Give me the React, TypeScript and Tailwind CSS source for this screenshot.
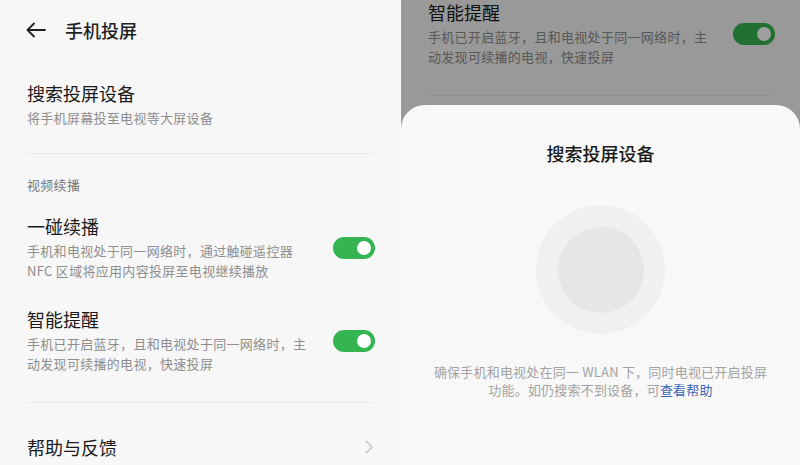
import React from "react";

const FONT = { fontFamily: '"Noto Sans CJK SC", "Noto Sans", sans-serif' };

function Toggle() {
  return (
    <div className="w-[42px] h-[22px] rounded-full bg-[#34b54f] flex items-center justify-end pr-[4px] shrink-0">
      <div className="w-[14px] h-[14px] rounded-full bg-white" />
    </div>
  );
}

function Page() {
  return (
    <div className="w-full bg-[#f7f7f7]">
      <div className="h-[60px] flex items-center pl-[26px]">
        <svg width="20" height="16" viewBox="0 0 20 16" className="shrink-0">
          <path d="M1.5 8 H19 M8 1.5 L1.5 8 L8 14.5" fill="none" stroke="#1f1f1f" strokeWidth="1.8" strokeLinecap="round" strokeLinejoin="round" />
        </svg>
        <div className="ml-[19px] text-[18px] leading-[24px] text-[#1f1f1f] font-medium">手机投屏</div>
      </div>
      <div className="px-[27px] pt-[21px]">
        <div className="text-[18px] leading-[24px] text-[#1a1a1a]">搜索投屏设备</div>
        <div className="mt-[3px] text-[13px] leading-[20px] tracking-[0.3px] text-[#8e8e8e]">将手机屏幕投至电视等大屏设备</div>
      </div>
      <div className="mx-[27px] mt-[25px] h-px bg-[#ebebeb]" />
      <div className="px-[27px] mt-[21px] text-[13px] leading-[20px] tracking-[0.3px] text-[#777]">视频续播</div>
      <div className="pl-[27px] pr-[25px] mt-[19px] flex items-center justify-between">
        <div>
          <div className="text-[18px] leading-[24px] text-[#1a1a1a]">一碰续播</div>
          <div className="mt-[3px] text-[13px] leading-[20px] tracking-[0.3px] text-[#8e8e8e]">
            手机和电视处于同一网络时，通过触碰遥控器
            <br />
            NFC 区域将应用内容投屏至电视继续播放
          </div>
        </div>
        <Toggle />
      </div>
      <div className="pl-[27px] pr-[25px] mt-[26px] flex items-center justify-between">
        <div>
          <div className="text-[18px] leading-[24px] text-[#1a1a1a]">智能提醒</div>
          <div className="mt-[3px] text-[13px] leading-[20px] tracking-[0.3px] text-[#8e8e8e]">
            手机已开启蓝牙，且和电视处于同一网络时，主
            <br />
            动发现可续播的电视，快速投屏
          </div>
        </div>
        <Toggle />
      </div>
      <div className="mx-[27px] mt-[28px] h-px bg-[#ebebeb]" />
      <div className="pl-[27px] pr-[26px] mt-[32px] flex items-center justify-between">
        <div className="text-[18px] leading-[24px] text-[#1a1a1a]">帮助与反馈</div>
        <svg width="10" height="16" viewBox="0 0 10 16">
          <path d="M2 2 L8 8 L2 14" fill="none" stroke="#c4c4c4" strokeWidth="1.4" strokeLinecap="round" strokeLinejoin="round" />
        </svg>
      </div>
      <div className="h-[200px]" />
    </div>
  );
}

export default function App() {
  return (
    <div className="w-[800px] h-[465px] flex overflow-hidden bg-white" style={FONT}>
      <div className="w-[400px] h-[465px] overflow-hidden shrink-0">
        <Page />
      </div>
      <div className="w-px bg-[#fbfbfb] shrink-0" />
      <div className="relative w-[399px] h-[465px] overflow-hidden shrink-0">
        <div className="mt-[-307px]">
          <Page />
        </div>
        <div className="absolute inset-0 bg-black/[0.38]" />
        <div className="absolute left-0 right-0 top-[105px] bottom-0 bg-[#f8f8f8] rounded-t-[24px] flex flex-col items-center pt-[36px]">
          <div className="text-[18px] leading-[24px] text-[#1a1a1a] font-medium">搜索投屏设备</div>
          <div className="mt-[40px] w-[129px] h-[129px] rounded-full bg-[#f0f0f0] flex items-center justify-center">
            <div className="w-[86px] h-[86px] rounded-full bg-[#e6e6e6]" />
          </div>
          <div className="mt-[29px] text-[13px] leading-[18px] tracking-[0.2px] text-[#a3a3a3] text-center">
            确保手机和电视处在同一 WLAN 下，同时电视已开启投屏
            <br />
            功能。如仍搜索不到设备，可<span className="text-[#3a68b8]">查看帮助</span>
          </div>
        </div>
      </div>
    </div>
  );
}
